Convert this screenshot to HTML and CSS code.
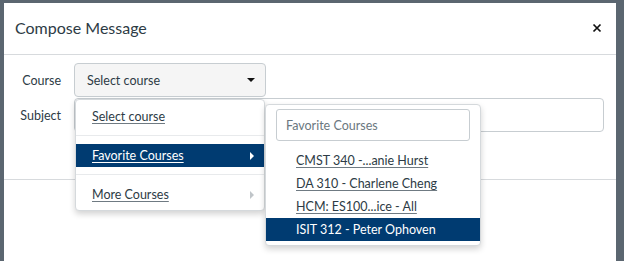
FILE: index.html
```html
<!DOCTYPE html>
<html>
<head>
    <meta charset="utf-8">
    <link rel="stylesheet" href="styles.css">
</head>
<body>
    <div class="dialog">
        <div class="dialog-header">
            <span class="dialog-title">Compose Message</span>
            <svg class="close" width="10" height="10" viewBox="0 0 10 10">
                <path d="M1.5 1.5 L8.5 8.5 M8.5 1.5 L1.5 8.5" stroke="#111" stroke-width="1.7" fill="none"/>
            </svg>
        </div>
        <div class="dialog-body">
            <div class="form-row">
                <label class="form-label">Course</label>
                <div class="select-box">
                    <span>Select course</span>
                    <span class="caret-down"></span>
                </div>
            </div>
            <div class="form-row">
                <label class="form-label">Subject</label>
                <div class="text-input wide"></div>
            </div>
        </div>

        <div class="menu menu-main">
            <div class="menu-item"><a>Select course</a></div>
            <div class="menu-sep"></div>
            <div class="menu-item active"><a>Favorite Courses</a><span class="caret-right"></span></div>
            <div class="menu-sep"></div>
            <div class="menu-item"><a>More Courses</a><span class="caret-right muted"></span></div>
        </div>

        <div class="menu menu-sub">
            <div class="menu-search">Favorite Courses</div>
            <div class="sub-item"><a>CMST 340 -...anie Hurst</a></div>
            <div class="sub-item"><a>DA 310 - Charlene Cheng</a></div>
            <div class="sub-item"><a>HCM: ES100...ice - All</a></div>
            <div class="sub-item active"><a>ISIT 312 - Peter Ophoven</a></div>
        </div>
    </div>
</body>
</html>
```

FILE: styles.css
```css
body {
    margin: 0;
    background: #5b6670;
    font-family: Lato, "Noto Sans", sans-serif;
    color: #2d3b45;
    height: 261px;
    overflow: hidden;
}
.dialog {
    position: relative;
    margin: 3px 0 0 4px;
    width: 612px;
    height: 258px;
    background: #ffffff;
}
.dialog-header {
    height: 51px;
    border-bottom: 1px solid #d7dadd;
    display: flex;
    align-items: center;
    justify-content: space-between;
    padding: 0 14px 0 11px;
}
.dialog-title {
    font-size: 16px;
    color: #2d3b45;
    margin-top: -2px;
}
.close {
    margin-top: -1px;
}
.dialog-body {
    padding: 8px 12px 47px 0;
    border-bottom: 1px solid #d7dadd;
    display: flex;
    flex-direction: column;
    gap: 1px;
}
.form-row {
    display: flex;
    align-items: center;
    gap: 13px;
}
.form-label {
    width: 57px;
    text-align: right;
    font-size: 12.5px;
}
.select-box {
    border: 1px solid #c7cdd1;
    border-radius: 4px;
    background: #f5f5f5;
    display: flex;
    align-items: center;
    justify-content: space-between;
    padding: 0 10px 0 12px;
    box-sizing: border-box;
    width: 192px;
    height: 34px;
    font-size: 12.5px;
}
.caret-down {
    width: 0;
    height: 0;
    border-left: 4px solid transparent;
    border-right: 4px solid transparent;
    border-top: 4px solid #111;
}
.text-input {
    height: 34px;
    box-sizing: border-box;
    border: 1px solid #c7cdd1;
    border-radius: 4px;
    background: #fff;
}
.wide {
    flex: 1;
}
.menu {
    position: absolute;
    background: #fff;
    border: 1px solid #d5d9dc;
    border-radius: 4px;
    box-shadow: 0 3px 6px rgba(0,0,0,0.18);
    box-sizing: border-box;
    font-size: 12.5px;
}
.menu a {
    text-decoration: underline;
    text-decoration-color: #6f7a82;
    text-underline-offset: 2px;
}
.menu-main {
    left: 71px;
    top: 96px;
    width: 190px;
    height: 112px;
    padding-top: 5px;
}
.menu-item {
    height: 23px;
    padding: 0 10px 0 16px;
    display: flex;
    align-items: center;
    justify-content: space-between;
}
.menu-item.active {
    background: #003b71;
    color: #fff;
}
.menu-item.active a {
    text-decoration-color: #fff;
}
.menu-sep {
    height: 1px;
    background: #e8eaec;
    margin: 7px 0 8px;
}
.caret-right {
    width: 0;
    height: 0;
    border-top: 4px solid transparent;
    border-bottom: 4px solid transparent;
    border-left: 4px solid #fff;
}
.caret-right.muted {
    border-left-color: #c0c5c9;
}
.menu-sub {
    left: 261px;
    top: 101px;
    width: 216px;
    height: 142px;
    padding-top: 4px;
    overflow: hidden;
}
.menu-search {
    margin: 0 10px 8px 10px;
    height: 32px;
    box-sizing: border-box;
    border: 1px solid #c7cdd1;
    border-radius: 3px;
    padding-left: 9px;
    display: flex;
    align-items: center;
    color: #6b7780;
}
.sub-item {
    height: 23px;
    padding-left: 30px;
    display: flex;
    align-items: center;
}
.sub-item.active {
    background: #003b71;
    color: #fff;
}
.sub-item.active a {
    text-decoration: none;
}
```
